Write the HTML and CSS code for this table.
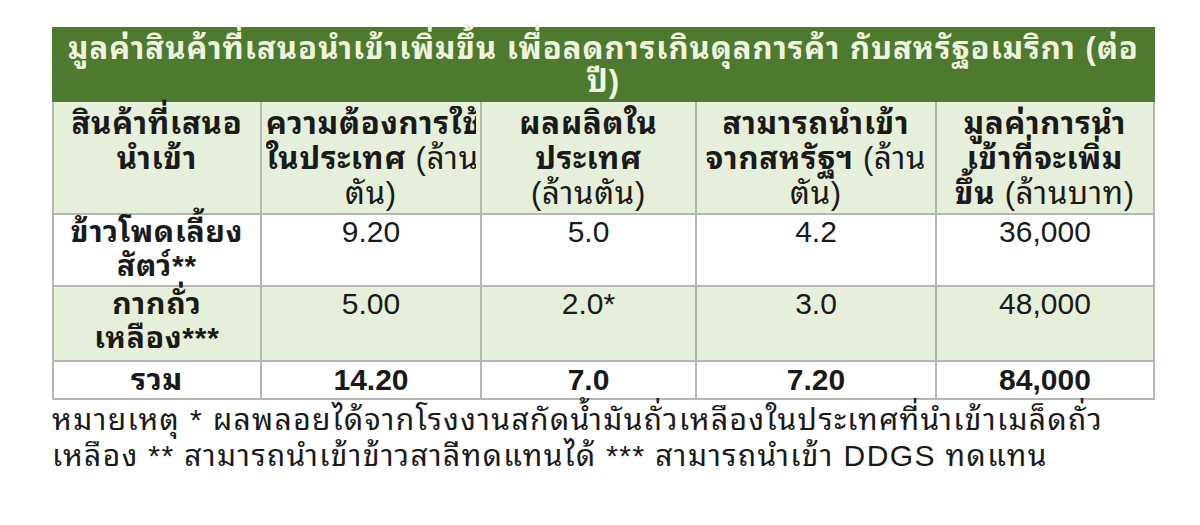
FILE: index.html
```html
<!DOCTYPE html>
<html lang="th">
<head>
<meta charset="utf-8">
<link rel="stylesheet" href="styles.css">
</head>
<body>
<div class="wrap">
<table class="tbl">
<colgroup>
<col class="c1"><col class="c2"><col class="c3"><col class="c4"><col class="c5">
</colgroup>
<tr class="title"><td colspan="5">มูลค่าสินค้าที่เสนอนำเข้าเพิ่มขึ้น เพื่อลดการเกินดุลการค้า กับสหรัฐอเมริกา (ต่อ<br>ปี)</td></tr>
<tr class="head">
<td><b>สินค้าที่เสนอ<br>นำเข้า</b></td>
<td><div class="clip"><b>ความต้องการใช้</b><br><b>ในประเทศ</b> (ล้าน<br>ตัน)</div></td>
<td><b>ผลผลิตใน<br>ประเทศ</b><br>(ล้านตัน)</td>
<td><b>สามารถนำเข้า<br>จากสหรัฐฯ</b> (ล้าน<br>ตัน)</td>
<td><b>มูลค่าการนำ<br>เข้าที่จะเพิ่ม<br>ขึ้น</b> (ล้านบาท)</td>
</tr>
<tr class="row">
<td class="name">ข้าวโพดเลี้ยง<br>สัตว์**</td>
<td>9.20</td><td>5.0</td><td>4.2</td><td>36,000</td>
</tr>
<tr class="row alt">
<td class="name">กากถั่ว<br>เหลือง***</td>
<td>5.00</td><td>2.0*</td><td>3.0</td><td>48,000</td>
</tr>
<tr class="total">
<td class="th">รวม</td><td>14.20</td><td>7.0</td><td>7.20</td><td>84,000</td>
</tr>
</table>
<p class="note">หมายเหตุ * ผลพลอยได้จากโรงงานสกัดน้ำมันถั่วเหลืองในประเทศที่นำเข้าเมล็ดถั่ว<br>เหลือง ** สามารถนำเข้าข้าวสาลีทดแทนได้ *** สามารถนำเข้า DDGS ทดแทน</p>
</div>
</body>
</html>
```
FILE: styles.css
```css
html, body {
  margin: 0;
  padding: 0;
  background: #ffffff;
}
body {
  font-family: "Liberation Sans", "Noto Sans Thai Looped", "Noto Sans Thai", sans-serif;
  color: #1a1a1a;
}
.wrap {
  padding: 27px 0 0 52px;
}
.tbl {
  border-collapse: collapse;
  table-layout: fixed;
  width: 1101px;
}
.c1 { width: 208px; }
.c2 { width: 220px; }
.c3 { width: 215px; }
.c4 { width: 240px; }
.c5 { width: 218px; }
.tbl td {
  border: 2px solid #b4b8b0;
  padding: 0 4px;
  text-align: center;
  vertical-align: top;
  font-size: 30px;
  line-height: 34px;
}
.title td {
  background: #4d7a2e;
  color: #eff4de;
  font-weight: bold;
  font-size: 31px;
  letter-spacing: 1px;
  height: 73px;
  line-height: 33px;
  padding-top: 3px;
  box-sizing: border-box;
  border-color: #4d7a2e;
}
.head td {
  background: #e6efd9;
  height: 113px;
  font-size: 31px;
  letter-spacing: 0.8px;
  line-height: 35px;
  padding-top: 4px;
  box-sizing: border-box;
}
.clip {
  overflow: hidden;
  white-space: nowrap;
}
.row td {
  height: 72px;
  background: #ffffff;
  box-sizing: border-box;
}
.row.alt td {
  height: 75px;
  background: #e6efd9;
}
.name {
  font-weight: bold;
  font-size: 31px;
  letter-spacing: 0.8px;
}
.total td {
  font-weight: bold;
  height: 38px;
  box-sizing: border-box;
  line-height: 36px;
}
.total .th {
  letter-spacing: 0.8px;
}
.note {
  margin: 2px 0 0 0;
  font-size: 30px;
  letter-spacing: 1.4px;
  line-height: 36px;
  color: #1a1a1a;
}
```
